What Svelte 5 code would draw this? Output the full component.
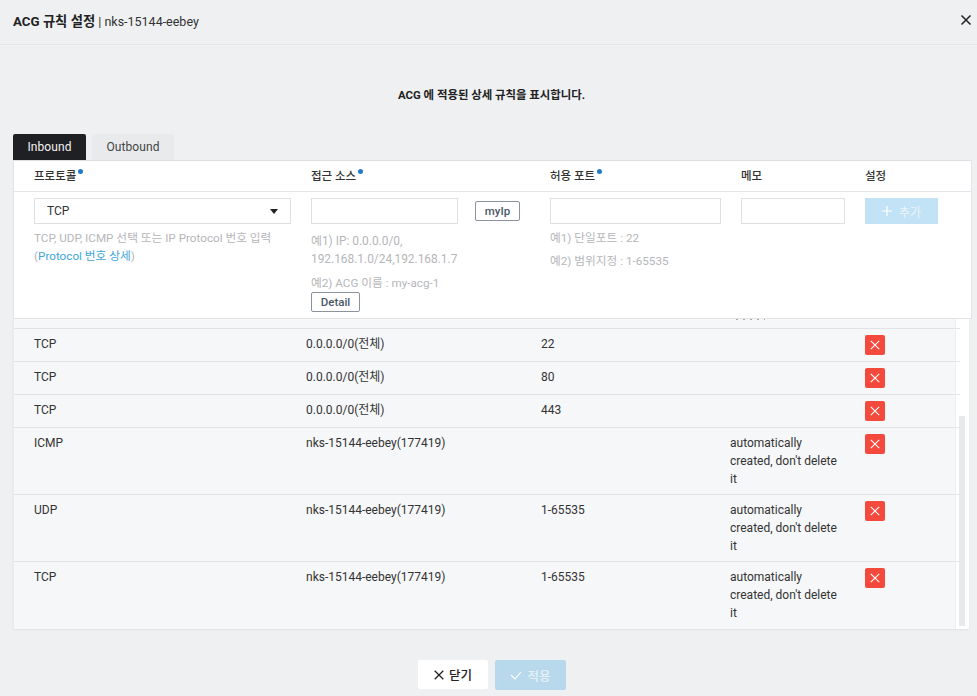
<script>
  const rows = [
    { p: 'TCP', s: '0.0.0.0/0(전체)', port: '22', memo: '' },
    { p: 'TCP', s: '0.0.0.0/0(전체)', port: '80', memo: '' },
    { p: 'TCP', s: '0.0.0.0/0(전체)', port: '443', memo: '' },
    { p: 'ICMP', s: 'nks-15144-eebey(177419)', port: '', memo: "automatically created, don't delete it" },
    { p: 'UDP', s: 'nks-15144-eebey(177419)', port: '1-65535', memo: "automatically created, don't delete it" },
    { p: 'TCP', s: 'nks-15144-eebey(177419)', port: '1-65535', memo: "automatically created, don't delete it" }
  ];
</script>

<div class="modal">
  <header class="head">
    <h1><strong>ACG 규칙 설정</strong> <span>| nks-15144-eebey</span></h1>
    <button class="close" aria-label="닫기">
      <svg viewBox="0 0 12 12" width="12" height="12"><path d="M1.5 1.5l9 9M10.5 1.5l-9 9" stroke="#222" stroke-width="1.5" fill="none"/></svg>
    </button>
  </header>

  <p class="desc">ACG 에 적용된 상세 규칙을 표시합니다.</p>

  <div class="tabs">
    <div class="tab on">Inbound</div>
    <div class="tab">Outbound</div>
  </div>

  <section class="panel">
    <div class="grid titles">
      <div>프로토콜<i></i></div>
      <div>접근 소스<i></i></div>
      <div>허용 포트<i></i></div>
      <div>메모</div>
      <div>설정</div>
    </div>
    <div class="grid form">
      <div>
        <div class="select">TCP<b></b></div>
        <p class="hint first">TCP, UDP, ICMP 선택 또는 IP Protocol 번호 입력<br />(<span class="link">Protocol 번호 상세</span>)</p>
      </div>
      <div>
        <div class="srcline">
          <div class="input src"></div>
          <button class="ghost myip">myIp</button>
        </div>
        <p class="hint ex">예1) IP: 0.0.0.0/0,<br />192.168.1.0/24,192.168.1.7</p>
        <p class="hint ex2">예2) ACG 이름 : my-acg-1</p>
        <button class="ghost detail">Detail</button>
      </div>
      <div>
        <div class="input port"></div>
        <p class="hint first">예1) 단일포트 : 22</p>
        <p class="hint second">예2) 범위지정 : 1-65535</p>
      </div>
      <div><div class="input memo"></div></div>
      <div>
        <button class="add">
          <svg viewBox="0 0 10 10" width="10" height="10"><path d="M5 0v10M0 5h10" stroke="#fff" stroke-width="1.2"/></svg>
          추가
        </button>
      </div>
    </div>
  </section>

  <section class="list">
    <div class="rows">
      <div class="spacer"><div class="remnant"></div></div>
      {#each rows as r}
        <div class="row">
          <div>{r.p}</div>
          <div>{r.s}</div>
          <div>{r.port}</div>
          <div class="memotext">{r.memo}</div>
          <div>
            <button class="del" aria-label="삭제">
              <svg viewBox="0 0 10 10" width="10" height="10"><path d="M.8.8l8.4 8.4M9.2.8L.8 9.2" stroke="#fff" stroke-width="1.1" fill="none"/></svg>
            </button>
          </div>
        </div>
      {/each}
    </div>
    <div class="track"><div class="thumb"></div></div>
  </section>

  <footer class="foot">
    <button class="cancel">
      <svg viewBox="0 0 10 10" width="10" height="10"><path d="M.7.7l8.6 8.6M9.3.7L.7 9.3" stroke="#222" stroke-width="1.3" fill="none"/></svg>
      닫기
    </button>
    <button class="apply">
      <svg viewBox="0 0 12 10" width="12" height="10"><path d="M1 5l4 4 6-7" stroke="#fff" stroke-width="1.1" fill="none"/></svg>
      적용
    </button>
  </footer>
</div>

<style>
  :global(body) {
    margin: 0;
    background: #eff0f2;
  }
  .modal {
    width: 977px;
    height: 696px;
    overflow: hidden;
    font-family: Roboto, "Noto Sans CJK KR", sans-serif;
    font-size: 12px;
    color: #333;
    background: #eff0f2;
  }
  .head {
    height: 45px;
    box-sizing: border-box;
    border-bottom: 1px solid #e4e5e7;
    padding: 0 5px 4px 13px;
    display: flex;
    align-items: center;
    justify-content: space-between;
  }
  h1 {
    margin: 0;
    font-size: 12.5px;
    font-weight: 400;
    color: #333;
  }
  h1 strong {
    font-size: 13.3px;
    font-weight: 700;
    color: #222;
  }
  button {
    font-family: inherit;
    cursor: pointer;
    padding: 0;
  }
  .close {
    border: 0;
    background: none;
    display: flex;
  }
  .desc {
    margin: 0;
    height: 89px;
    padding: 42px 0 0 6px;
    box-sizing: border-box;
    text-align: center;
    font-size: 11.4px;
    font-weight: 700;
    color: #222;
    line-height: 16px;
  }
  .tabs {
    display: flex;
    gap: 6px;
    margin-left: 13px;
    height: 26px;
  }
  .tab {
    width: 82px;
    line-height: 26px;
    text-align: center;
    background: #e9eaec;
    color: #444;
    border-radius: 2px 2px 0 0;
    letter-spacing: 0.1px;
  }
  .tab.on {
    width: 73px;
    background: #1f2023;
    color: #f2f2f2;
  }
  .panel {
    position: relative;
    z-index: 1;
    width: 959px;
    height: 159px;
    box-sizing: border-box;
    margin-left: 13px;
    background: #fff;
    border: 1px solid #e3e4e6;
    border-top-color: #dfe0e2;
  }
  .grid {
    display: grid;
    grid-template-columns: 277px 239px 191px 124px 1fr;
    padding-left: 20px;
  }
  .titles {
    height: 31px;
    box-sizing: border-box;
    border-bottom: 1px solid #e4e5e7;
    line-height: 30px;
    font-size: 11.5px;
    font-weight: 500;
    color: #333;
  }
  .titles i {
    display: inline-block;
    width: 5px;
    height: 5px;
    border-radius: 50%;
    background: #1f7ccb;
    margin-left: 2px;
    vertical-align: 6px;
  }
  .form {
    padding-top: 6px;
  }
  .select,
  .input {
    height: 26px;
    box-sizing: border-box;
    border: 1px solid #dfe0e3;
    background: #fff;
  }
  .select {
    width: 257px;
    padding-left: 12px;
    line-height: 24px;
    position: relative;
    color: #333;
  }
  .select b {
    position: absolute;
    right: 12px;
    top: 10px;
    border-left: 4px solid transparent;
    border-right: 4px solid transparent;
    border-top: 5px solid #222;
  }
  .srcline {
    display: flex;
    gap: 17px;
    align-items: center;
  }
  .src { width: 147px; }
  .port { width: 171px; }
  .memo { width: 104px; }
  .ghost {
    height: 20px;
    box-sizing: border-box;
    background: #fff;
    border: 1px solid #8b939e;
    border-radius: 2px;
    color: #4a5668;
    font-size: 11.5px;
    font-weight: 500;
  }
  .myip { width: 45px; }
  .detail { width: 49px; display: block; }
  .hint {
    margin: 0;
    color: #b5b6b9;
    font-size: 11.7px;
    line-height: 18px;
  }
  .hint.first { margin-top: 5px; }
  .hint.second { margin-top: 5px; }
  .hint.ex { margin-top: 8px; font-size: 11.9px; }
  .hint.ex2 { margin-top: 6px; }
  .link { color: #3ea6da; }
  .add {
    width: 73px;
    height: 26px;
    border: 0;
    background: #c2e2f5;
    color: #eaf5fb;
    font-size: 12px;
    display: flex;
    align-items: center;
    justify-content: center;
    gap: 7px;
  }
  .list {
    display: flex;
    width: 956px;
    height: 310px;
    margin-left: 13px;
    background: #fff;
    box-shadow: 0 1px 2px rgba(0, 0, 0, 0.06);
  }
  .rows {
    width: 942px;
    background: #f6f7f9;
    border-left: 1px solid #e9eaec;
    box-sizing: border-box;
  }
  .spacer {
    height: 9px;
    padding-left: 722px;
  }
  .remnant {
    width: 29px;
    height: 1px;
    background: repeating-linear-gradient(90deg, #a9aaad 0 2px, transparent 2px 7px);
  }
  .row {
    display: grid;
    grid-template-columns: 272px 235px 189px 135px 1fr;
    margin-right: -5px;
    padding: 6px 0 6px 20px;
    border-top: 1px solid #e2e3e6;
    box-sizing: border-box;
    min-height: 33px;
    line-height: 18px;
    color: #333;
  }
  .memotext {
    width: 112px;
  }
  .del {
    display: flex;
    width: 20px;
    height: 20px;
    border: 0;
    border-radius: 2px;
    background: #f44a3e;
    align-items: center;
    justify-content: center;
  }
  .track {
    flex: 1;
    position: relative;
    border-left: 1px solid #eceef0;
  }
  .thumb {
    position: absolute;
    left: 3px;
    width: 6px;
    top: 97px;
    bottom: 3px;
    background: #e8e9eb;
  }
  .foot {
    display: flex;
    justify-content: center;
    gap: 7px;
    padding: 31px 0 0 7px;
  }
  .cancel,
  .apply {
    width: 70px;
    height: 29px;
    border: 0;
    border-radius: 2px;
    font-size: 12.5px;
    font-weight: 500;
    display: flex;
    align-items: center;
    justify-content: center;
    gap: 5px;
  }
  .cancel {
    background: #fff;
    color: #222;
  }
  .apply {
    width: 71px;
    height: 30px;
    background: #b8d9ec;
    color: #e4f1f9;
  }
</style>
